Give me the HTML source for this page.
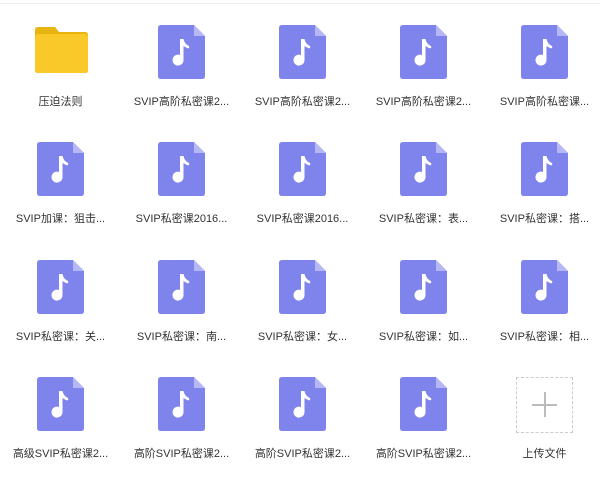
<!DOCTYPE html><html><head><meta charset="utf-8"><style>
body{margin:0;width:600px;height:485px;background:#fff;position:relative;overflow:hidden;font-family:"Liberation Sans","Noto Sans CJK SC",sans-serif;}
.top{position:absolute;left:0;top:0;width:600px;height:3px;border-bottom:1px solid #eee;}
.it{position:absolute;width:121px;text-align:center;}
.it svg{display:block;margin:0 auto;}
.t{position:absolute;left:0;width:121px;font-size:11px;color:#333;white-space:nowrap;text-align:center;}
</style></head><body><div class="top"></div>
<script>
const cols=[0,121,242,363,484];
const rows=[25,142,260,377];
const names=[
["压迫法则","SVIP高阶私密课2...","SVIP高阶私密课2...","SVIP高阶私密课2...","SVIP高阶私密课..."],
["SVIP加课：狙击...","SVIP私密课2016...","SVIP私密课2016...","SVIP私密课：表...","SVIP私密课：搭..."],
["SVIP私密课：关...","SVIP私密课：南...","SVIP私密课：女...","SVIP私密课：如...","SVIP私密课：相..."],
["高级SVIP私密课2...","高阶SVIP私密课2...","高阶SVIP私密课2...","高阶SVIP私密课2...","上传文件"]];
const music='<svg width="47" height="54" viewBox="0 0 47 54"><path d="M3 0H36L47 11V51Q47 54 44 54H3Q0 54 0 51V3Q0 0 3 0Z" fill="#7f83ec"/><path d="M36 0L47 11H36Z" fill="#b6b8f6"/><path d="M22 14H25.5Q26.5 19 31 21Q32 24 29 23Q27 22 25.5 21V35A5.5 5.5 0 1 1 22 30Z" fill="#fff"/></svg>';
const folder='<svg width="54" height="54" viewBox="0 0 54 54"><path d="M1 5Q1 2 4 2H21L25 7H51Q54 7 54 10V45Q54 48 51 48H4Q1 48 1 45Z" fill="#e8b510"/><path d="M1 12Q1 9 4 9H51Q54 9 54 12V45Q54 48 51 48H4Q1 48 1 45Z" fill="#f9c829"/></svg>';
const up='<div style="width:55px;height:54px;margin:0 auto;border:1px dashed #ccc;position:relative"><div style="position:absolute;left:15px;top:26px;width:25px;height:1.5px;background:#bbb"></div><div style="position:absolute;left:27px;top:14px;width:1.5px;height:25px;background:#bbb"></div></div>';
let h='';
for(let r=0;r<4;r++)for(let c=0;c<5;c++){
 let ic=(r==0&&c==0)?folder:(r==3&&c==4)?up:music;
 h+=`<div class="it" style="left:${cols[c]}px;top:${rows[r]}px">${ic}<div class="t" style="top:${r==0&&c==0?68:68}px">${names[r][c]}</div></div>`;
}
document.body.insertAdjacentHTML('beforeend',h);
</script></body></html>
